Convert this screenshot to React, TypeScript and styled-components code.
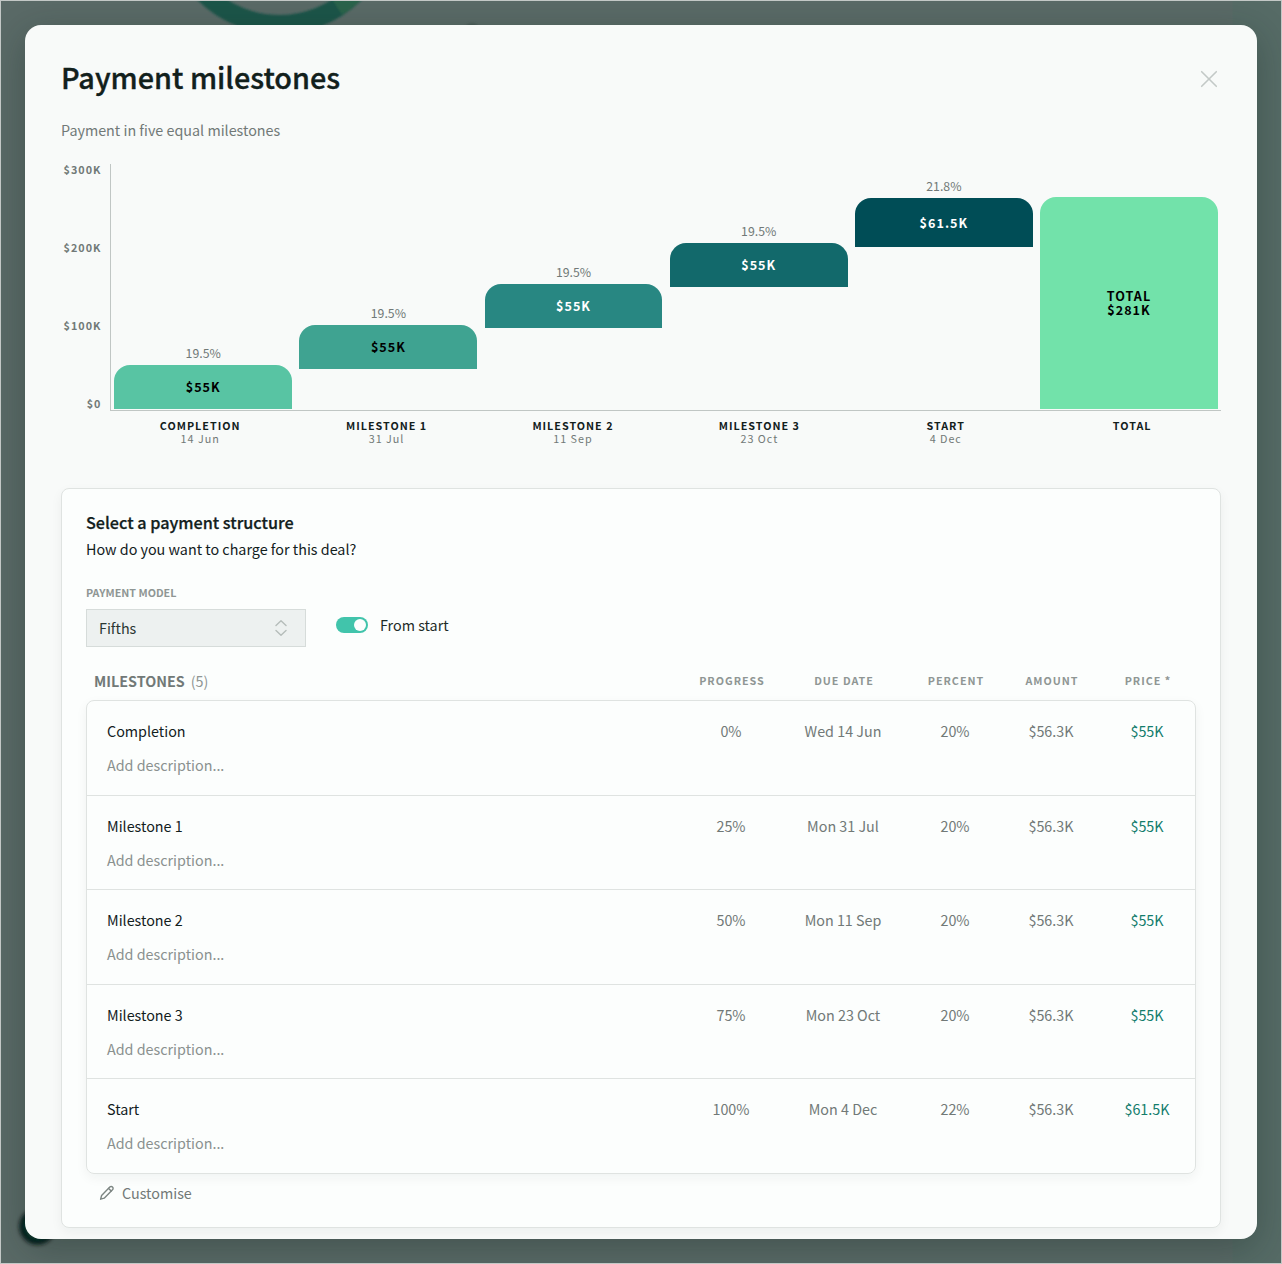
import React from "react";
import styled, { createGlobalStyle } from "styled-components";

const GlobalStyle = createGlobalStyle`
  *, *::before, *::after { box-sizing: border-box; }
  html, body { margin: 0; padding: 0; }
  body {
    font-family: "Noto Sans CJK SC", "Open Sans", sans-serif;
    font-size: 14.34px;
    line-height: 20px;
    color: #12201c;
    -webkit-font-smoothing: antialiased;
  }
  button { font: inherit; color: inherit; border: 0; background: none; padding: 0; }
`;

const Backdrop = styled.div`
  position: relative;
  width: 1282px;
  height: 1264px;
  overflow: hidden;
  padding: 24px;
  border: 1px solid #c3c8c6;
  background: linear-gradient(90deg, #5a6a67 0, #5a6a67 1231px, #566b66 1232px);
`;

const BackdropArt = styled.svg`
  position: absolute;
  inset: -1px;
  width: 1282px;
  height: 1264px;
`;

const Dialog = styled.section`
  position: relative;
  width: 1232px;
  height: 1214px;
  padding: 36px 36px 0;
  border-radius: 16px;
  background: #f8faf9;
  box-shadow: 0 10px 36px rgba(20, 36, 30, 0.32);
  overflow: hidden;
`;

const DialogHeader = styled.header`
  display: flex;
  align-items: center;
  justify-content: space-between;
  height: 36px;
`;

const Title = styled.h1`
  margin: 0 0 4px;
  font-size: 28.8px;
  line-height: 36px;
  font-weight: 500;
  -webkit-text-stroke: 0.35px currentColor;
`;

const CloseButton = styled.button`
  display: flex;
  margin-right: 3px;
`;

const Subtitle = styled.p`
  margin: 23px 0 0;
  line-height: 20px;
  color: #717977;
`;

const Chart = styled.div`
  display: grid;
  grid-template-columns: 49px 1111px;
  margin-top: 24px;
`;

const YAxis = styled.div`
  display: flex;
  flex-direction: column;
  justify-content: space-between;
  align-items: flex-end;
  height: 246px;
  margin-top: -1px;
  padding: 0 8.5px 0 0;
`;

const Tick = styled.span`
  font-size: 10.8px;
  line-height: 12px;
  font-weight: 700;
  letter-spacing: 1px;
  color: #717977;
`;

const Plot = styled.div`
  display: grid;
  grid-template-columns: repeat(6, 1fr);
  height: 247px;
  border-bottom: 1px solid #c0c6c4;
  box-shadow: inset 1px 0 #c0c6c4;
`;

const Column = styled.div`
  display: flex;
  flex-direction: column;
  justify-content: flex-end;
  padding: 0 3.1px 1px 4.3px;
`;

const Share = styled.span`
  text-align: center;
  font-size: 12.3px;
  line-height: 14px;
  padding-bottom: 5px;
  color: #717977;
  height: 19px;
`;

const Bar = styled.div<{ $fill: string; $ink: string }>`
  display: flex;
  flex-direction: column;
  align-items: center;
  justify-content: center;
  flex: none;
  border-radius: 16px 16px 0 0;
  background: ${(p) => p.$fill};
  color: ${(p) => p.$ink};
  font-size: 12.6px;
  line-height: 14px;
  font-weight: 700;
  letter-spacing: 1px;
`;

const XAxis = styled.div`
  grid-column: 1 / -1;
  display: grid;
  grid-template-columns: repeat(6, 186.4px);
  margin: 8px -5px 1px 46px;
  text-align: center;
  font-size: 10.75px;
  line-height: 13px;
  letter-spacing: 1px;
`;

const XLabel = styled.div`
  display: flex;
  flex-direction: column;
  height: 26px;
  color: #717977;

  strong { color: #12201c; font-weight: 700; }
`;

const Panel = styled.section`
  margin-top: 42px;
  height: 740px;
  padding: 23px 24px 24px;
  border: 1px solid #dfe3e1;
  border-radius: 8px;
  background: #fcfefd;
  box-shadow: 0 4px 12px rgba(20, 40, 34, 0.05);
`;

const PanelTitle = styled.h2`
  margin: 0;
  font-size: 16.2px;
  line-height: 20px;
  font-weight: 500;
  -webkit-text-stroke: 0.25px currentColor;
`;

const PanelText = styled.p`
  margin: 7px 0 0;
  line-height: 20px;
`;

const Controls = styled.div`
  display: flex;
  gap: 30px;
  margin-top: 26px;
`;

const FieldLabel = styled.label`
  display: block;
  padding-top: 1px;
  font-size: 10.75px;
  line-height: 14px;
  font-weight: 700;
  color: #8f9694;
`;

const Select = styled.button`
  display: flex;
  align-items: center;
  justify-content: space-between;
  width: 220px;
  height: 38px;
  margin-top: 9px;
  padding: 0 18px 0 12px;
  border: 1px solid #d6dcda;
  background: #edf1f0;
  color: #2a3733;
`;

const SwitchLabel = styled.label`
  display: flex;
  align-items: center;
  gap: 12px;
  height: 20px;
  margin-top: 30px;
  color: #1e2b27;
`;

const Track = styled.span`
  display: flex;
  justify-content: flex-end;
  width: 32px;
  height: 16px;
  padding: 2px;
  border-radius: 8px;
  background: #41c4ab;
`;

const Thumb = styled.span`
  width: 12px;
  height: 12px;
  border-radius: 50%;
  background: #fcfefd;
`;

const columns = "1fr 96px 128px 96px 96px 96px";

const TableHead = styled.div`
  display: grid;
  grid-template-columns: ${columns};
  height: 20px;
  margin: 24px 1px 9px;
  padding-left: 7px;
`;

const TableTitle = styled.div`
  display: flex;
  gap: 6px;
  color: #8f9694;

  strong { font-weight: 700; color: #717977; }
`;

const HeadCell = styled.span`
  padding: 4px 0 0 2px;
  text-align: center;
  font-size: 10.75px;
  line-height: 12px;
  font-weight: 700;
  letter-spacing: 1px;
  color: #8f9694;
`;

const Table = styled.div`
  height: 474px;
  border: 1px solid #dfe3e1;
  border-radius: 8px;
  box-shadow: 0 4px 12px rgba(20, 40, 34, 0.05);
  display: grid;
  grid-template-rows: repeat(5, 94.5px);
`;

const Row = styled.div`
  display: grid;
  grid-template-columns: ${columns};
  padding-top: 20px;
  border-bottom: 1px solid #dfe3e1;

  &:last-child { border-bottom: 0; }
`;

const NameCell = styled.div`
  display: flex;
  flex-direction: column;
  gap: 14px;
  padding-left: 20px;
`;

const Placeholder = styled.span`
  color: #8a918f;
`;

const Cell = styled.span<{ $accent?: boolean }>`
  text-align: center;
  color: ${(p) => (p.$accent ? "#137d6c" : "#717977")};
`;

const Customise = styled.button`
  display: flex;
  align-items: center;
  gap: 7px;
  margin: 9px 0 0 13px;
  color: #717977;
`;

const bars = [
  { share: "19.5%", value: "$55K", base: 0, height: 44, fill: "#58c4a3", ink: "#000" },
  { share: "19.5%", value: "$55K", base: 40, height: 44, fill: "#3fa391", ink: "#000" },
  { share: "19.5%", value: "$55K", base: 81, height: 44, fill: "#288782", ink: "#fff" },
  { share: "19.5%", value: "$55K", base: 122, height: 44, fill: "#12696b", ink: "#fff" },
  { share: "21.8%", value: "$61.5K", base: 162, height: 49, fill: "#004d56", ink: "#fff" },
];

const labels = [
  ["COMPLETION", "14 Jun"],
  ["MILESTONE 1", "31 Jul"],
  ["MILESTONE 2", "11 Sep"],
  ["MILESTONE 3", "23 Oct"],
  ["START", "4 Dec"],
  ["TOTAL", ""],
];

const rows = [
  ["Completion", "0%", "Wed 14 Jun", "20%", "$56.3K", "$55K"],
  ["Milestone 1", "25%", "Mon 31 Jul", "20%", "$56.3K", "$55K"],
  ["Milestone 2", "50%", "Mon 11 Sep", "20%", "$56.3K", "$55K"],
  ["Milestone 3", "75%", "Mon 23 Oct", "20%", "$56.3K", "$55K"],
  ["Start", "100%", "Mon 4 Dec", "22%", "$56.3K", "$61.5K"],
];

export default function App() {
  return (
    <Backdrop>
      <GlobalStyle />
      <BackdropArt viewBox="0 0 1282 1264" aria-hidden="true">
        <defs>
          <filter id="soft" x="-20%" y="-20%" width="140%" height="140%">
            <feGaussianBlur stdDeviation="1.2" />
          </filter>
          <filter id="softer" x="-40%" y="-40%" width="180%" height="180%">
            <feGaussianBlur stdDeviation="2" />
          </filter>
        </defs>
        <g filter="url(#soft)" fill="none" strokeWidth="19">
          <circle cx="279.5" cy="-82" r="106.5" stroke="#1b5549" />
          <path d="M337 7 A106.5 106.5 0 0 0 386 -82" stroke="#2c644b" />
        </g>
        <circle cx="472" cy="32" r="9" fill="#4a5b57" filter="url(#soft)" />
        <circle cx="37.5" cy="1226.5" r="15.5" fill="#0b3d31" stroke="#031512" strokeWidth="5" filter="url(#softer)" />
        <rect width="1282" height="1" fill="#c3c8c6" />
        <rect width="1" height="1264" fill="#c3c8c6" />
      </BackdropArt>

      <Dialog>
        <DialogHeader>
          <Title>Payment milestones</Title>
          <CloseButton aria-label="Close">
            <svg width="18" height="18" viewBox="0 0 18 18" fill="none" stroke="#c3c9c7" strokeWidth="1.6" strokeLinecap="round">
              <path d="M1.7 1.7 16.3 16.3M16.3 1.7 1.7 16.3" />
            </svg>
          </CloseButton>
        </DialogHeader>
        <Subtitle>Payment in five equal milestones</Subtitle>

        <Chart>
          <YAxis>
            {["$300K", "$200K", "$100K", "$0"].map((t) => (
              <Tick key={t}>{t}</Tick>
            ))}
          </YAxis>
          <Plot>
            {bars.map((b, i) => (
              <Column key={i}>
                <Share>{b.share}</Share>
                <Bar $fill={b.fill} $ink={b.ink} style={{ height: b.height, marginBottom: b.base }}>
                  {b.value}
                </Bar>
              </Column>
            ))}
            <Column>
              <Bar $fill="#72e2aa" $ink="#000" style={{ height: 212 }}>
                <span>TOTAL</span>
                <span>$281K</span>
              </Bar>
            </Column>
          </Plot>
          <XAxis>
            {labels.map(([name, date]) => (
              <XLabel key={name}>
                <strong>{name}</strong>
                <span>{date}</span>
              </XLabel>
            ))}
          </XAxis>
        </Chart>

        <Panel>
          <PanelTitle>Select a payment structure</PanelTitle>
          <PanelText>How do you want to charge for this deal?</PanelText>
          <Controls>
            <div>
              <FieldLabel>PAYMENT MODEL</FieldLabel>
              <Select>
                Fifths
                <svg width="12" height="16" viewBox="0 0 12 16" fill="none" stroke="#b5bdba" strokeWidth="1.4" strokeLinecap="round" strokeLinejoin="round">
                  <path d="M1 5.5 6 .8 11 5.5M1 10.5 6 15.2 11 10.5" />
                </svg>
              </Select>
            </div>
            <SwitchLabel>
              <Track>
                <Thumb />
              </Track>
              From start
            </SwitchLabel>
          </Controls>

          <TableHead>
            <TableTitle>
              <strong>MILESTONES</strong>
              <span>(5)</span>
            </TableTitle>
            {["PROGRESS", "DUE DATE", "PERCENT", "AMOUNT", "PRICE *"].map((h) => (
              <HeadCell key={h}>{h}</HeadCell>
            ))}
          </TableHead>
          <Table>
            {rows.map(([name, progress, due, percent, amount, price]) => (
              <Row key={name}>
                <NameCell>
                  <span>{name}</span>
                  <Placeholder>Add description...</Placeholder>
                </NameCell>
                <Cell>{progress}</Cell>
                <Cell>{due}</Cell>
                <Cell>{percent}</Cell>
                <Cell>{amount}</Cell>
                <Cell $accent>{price}</Cell>
              </Row>
            ))}
          </Table>
          <Customise>
            <svg width="16" height="16" viewBox="0 0 16 16" fill="none" stroke="#7d8683" strokeWidth="1.4" strokeLinejoin="round" strokeLinecap="round">
              <path d="M1.6 14.2 2.6 10.5 10.8 2.1a1.85 1.85 0 0 1 2.7 0 1.85 1.85 0 0 1 0 2.7L5.2 13.2Z" />
              <path d="M9.600 3.500 12.200 6.100" />
            </svg>
            Customise
          </Customise>
        </Panel>
      </Dialog>
    </Backdrop>
  );
}
